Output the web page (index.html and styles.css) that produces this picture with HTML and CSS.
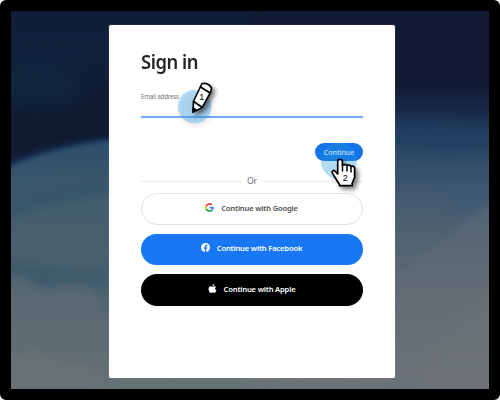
FILE: index.html
```html
<!DOCTYPE html>
<html lang="en">
<head>
<meta charset="utf-8">
<title>Sign in</title>
<link rel="stylesheet" href="styles.css">
</head>
<body>
<main class="frame">
  <svg class="scene" viewBox="11 11 478 378" preserveAspectRatio="none" color-interpolation-filters="sRGB" aria-hidden="true">
    <defs>
      <linearGradient id="sky" x1="0" y1="0" x2="0" y2="1">
        <stop offset="0" stop-color="#101c38"/>
        <stop offset=".14" stop-color="#10213c"/>
        <stop offset=".27" stop-color="#101a30"/>
        <stop offset="1" stop-color="#101a30"/>
      </linearGradient>
      <linearGradient id="earth" gradientUnits="userSpaceOnUse" x1="0" y1="130" x2="0" y2="389">
        <stop offset="0" stop-color="#294b6b"/>
        <stop offset=".18" stop-color="#38566c"/>
        <stop offset=".5" stop-color="#48606c"/>
        <stop offset="1" stop-color="#6e7577"/>
      </linearGradient>
      <linearGradient id="right" gradientUnits="userSpaceOnUse" x1="0" y1="85" x2="0" y2="389">
        <stop offset="0" stop-color="#111c35"/>
        <stop offset=".08" stop-color="#172947"/>
        <stop offset=".15" stop-color="#203a5b"/>
        <stop offset=".23" stop-color="#2e4b67"/>
        <stop offset=".37" stop-color="#435970"/>
        <stop offset=".48" stop-color="#4f6271"/>
        <stop offset=".72" stop-color="#616b74"/>
        <stop offset="1" stop-color="#707577"/>
      </linearGradient>
      <filter id="b2" x="-20%" y="-20%" width="140%" height="140%"><feGaussianBlur stdDeviation="2"/></filter>
      <filter id="b4" x="-20%" y="-20%" width="140%" height="140%"><feGaussianBlur stdDeviation="3.500"/></filter>
      <filter id="b5" x="-30%" y="-30%" width="160%" height="160%"><feGaussianBlur stdDeviation="5"/></filter>
      <filter id="b10" x="-50%" y="-50%" width="200%" height="200%"><feGaussianBlur stdDeviation="10"/></filter>
    </defs>
    <rect width="500" height="400" fill="url(#sky)"/>
    <ellipse cx="35" cy="88" rx="48" ry="23" fill="#10304a" opacity=".45" filter="url(#b10)"/>
    <path d="M0 166Q50 144 120 137V150L0 176Z" fill="#17365e" filter="url(#b4)"/>
    <path d="M0 171Q50 147 120 139H260V400H0Z" fill="url(#earth)" filter="url(#b2)"/>
    <path d="M0 191Q60 165 120 171V193L70 199L0 218Z" fill="#3b5669" opacity=".6" filter="url(#b5)"/>
    <path d="M0 207Q40 196 120 179V196L60 202L0 221Z" fill="#325370" opacity=".4" filter="url(#b5)"/>
    <path d="M0 219L20 215L42 206L62 202L80 202L94 194L120 192V290H0Z" fill="#4c626e" opacity=".5" filter="url(#b4)"/>
    <path d="M0 263Q35 260 60 267T120 263V286L88 289L62 286L38 289L24 281L0 288Z" fill="#35566a" opacity=".55" filter="url(#b5)"/>
    <path d="M0 281Q24 268 32 285L52 289L66 285Q86 280 96 294Q103 313 120 319V400H0Z" fill="#606c75" opacity=".5" filter="url(#b4)"/>
    <path d="M100 274H120V320L106 311Z" fill="#48616e" opacity=".6" filter="url(#b5)"/>
    <path d="M0 359L38 351L52 360L82 361L108 381V400H0Z" fill="#707472" opacity=".5" filter="url(#b4)"/>
    <rect x="250" width="250" height="400" fill="url(#right)"/>
    <rect x="250" width="250" height="85" fill="#10182f" opacity=".65" filter="url(#b5)"/>
    <path d="M380 120Q432 120 500 130V149L448 155L380 144Z" fill="#1f4266" opacity=".5" filter="url(#b5)"/>
    <path d="M440 187L500 184V199L462 213Z" fill="#3d5878" opacity=".55" filter="url(#b5)"/>
    <path d="M530 182L475 214L457 230L415 260L385 286V420H530Z" fill="#687078" opacity=".35" filter="url(#b4)"/>
    <path d="M530 250L440 340L405 420H530Z" fill="#737876" opacity=".3" filter="url(#b10)"/>
    <path d="M90 379L190 374L250 379L420 382V400H90Z" fill="#657278" opacity=".7" filter="url(#b4)"/>
  </svg>

  <section class="card">
    <h1 class="title">Sign in</h1>
    <label class="label" for="email">Email address</label>
    <input class="field" id="email" type="email">
    <div class="actions"><button class="continue">Continue</button></div>
    <div class="divider"><span>Or</span></div>
    <div class="providers">
      <button class="provider google">
        <svg class="logo" viewBox="0 0 48 48" aria-hidden="true">
          <path fill="#ea4335" d="M24 9.500c3.500 0 6.700 1.200 9.200 3.600l6.900-6.900C35.900 2.400 30.500 0 24 0 14.600 0 6.500 5.400 2.600 13.200l8 6.200C12.400 13.700 17.700 9.500 24 9.500z"/>
          <path fill="#4285f4" d="M47 24.500c0-1.600-.2-3.100-.4-4.500H24v9h12.900c-.6 3-2.300 5.500-4.700 7.200l7.700 6C44.400 38 47 31.800 47 24.500z"/>
          <path fill="#fbbc05" d="M10.500 28.600A14.500 14.500 0 0 1 10.500 19.400l-8-6.200a24 24 0 0 0 0 21.600z"/>
          <path fill="#34a853" d="M24 48c6.500 0 11.900-2.100 15.900-5.800l-7.700-6c-2.200 1.500-4.900 2.300-8.200 2.300-6.300 0-11.600-4.200-13.500-9.900l-8 6.200C6.500 42.600 14.600 48 24 48z"/>
        </svg>
        <span>Continue with Google</span>
      </button>
      <button class="provider facebook">
        <svg class="logo" viewBox="0 0 24 24" aria-hidden="true">
          <path fill="#fff" d="M24 12.070C24 5.400 18.600 0 12 0S0 5.400 0 12.070C0 18.100 4.400 23.100 10.100 24v-8.400H7.100v-3.500h3V9.400c0-3 1.800-4.700 4.500-4.700 1.300 0 2.700.2 2.700.2v3h-1.500c-1.500 0-2 .9-2 1.900v2.300h3.400l-.5 3.500h-2.900V24C19.600 23.100 24 18.100 24 12.070z"/>
        </svg>
        <span>Continue with Facebook</span>
      </button>
      <button class="provider apple">
        <svg class="logo" viewBox="0 0 24 24" aria-hidden="true">
          <path fill="#fff" d="M16.800 0c.2 2.900-2.200 5.700-5 5.500C11.500 2.800 14 .2 16.800 0zM21.600 8.200c-4 2.500-3.400 7.700.8 9.300-.8 2.200-2.900 6-5.300 6.300-1.700.1-2.400-1-4.600-1s-3 1-4.500 1C4.800 23.800 1.500 17.500 1.500 13c0-4.500 2.800-7.200 6-7.200 2 0 3.400 1.200 5 1.200 1.500 0 2.700-1.300 5.300-1.300 1.500 0 2.900.9 3.800 2.500z"/>
        </svg>
        <span>Continue with Apple</span>
      </button>
    </div>
  </section>

  <svg class="marker pencil" viewBox="170 75 55 60" aria-hidden="true">
    <circle class="halo" cx="194.700" cy="106.500" r="16.800"/>
    <g class="drawn" stroke-linejoin="round" stroke-linecap="round">
      <path d="M202 83.500Q208.500 82.500 211.500 88L210.700 92L202.200 107.600L193.200 112L193.400 101.500Z" fill="#fff" stroke="#000" stroke-width="1.600"/>
      <path d="M200.500 87L209.300 92.500M193.700 101.500L202 107.200" fill="none" stroke="#000" stroke-width="1.700"/>
      <path d="M193.200 107.500L196.400 109.700L193 112.500Z" stroke="#000"/>
    </g>
    <text class="digit" x="199.200" y="99.800">1</text>
  </svg>
  <svg class="marker hand" viewBox="310 140 60 60" aria-hidden="true">
    <circle class="halo" cx="339" cy="161" r="18"/>
    <g class="drawn">
      <path d="M340 159.400Q337.700 159.400 337.700 161.700V174L335 171.200Q333 169.600 332.200 171.500Q332 172.500 333.200 174.400L339.500 184.500V185.700H352.200V183L354.600 177.500V168.200Q354.200 165.600 351.200 166.300Q350 164.500 347 165.400Q345.600 163.900 342.400 165V161.700Q342.400 159.400 340 159.400Z" fill="#fff" stroke="#000" stroke-width="1.700" stroke-linejoin="round"/>
      <path d="M342.500 164.500V171M347 165.500V171M351 166.500V172" fill="none" stroke="#000" stroke-width="1.500" stroke-linecap="round"/>
    </g>
    <text class="digit" x="342.700" y="181.200">2</text>
  </svg>
</main>
</body>
</html>
```
FILE: styles.css
```css
* { box-sizing: border-box; }

body {
  margin: 0;
  background: #fff;
  font-family: "Noto Sans", "Open Sans", sans-serif;
}

.frame {
  position: relative;
  display: flex;
  justify-content: center;
  align-items: flex-start;
  width: 500px;
  height: 400px;
  padding: 14px 0 0 4px;
  border: 11px solid #000;
  border-radius: 6px;
  background: #000;
  overflow: hidden;
}

.scene {
  position: absolute;
  inset: 0;
  width: 478px;
  height: 378px;
}

.card {
  position: relative;
  width: 286px;
  height: 353px;
  padding: 24px 32px 0;
  border-radius: 2px;
  background: #fff;
  box-shadow: 0 0 1px rgba(210, 225, 240, .6);
}

.title {
  margin: 0;
  color: #252525;
  font-size: 20px;
  font-weight: 600;
  line-height: 26px;
  letter-spacing: -.5px;
  transform: scaleX(.92);
  transform-origin: left;
}

.label {
  display: block;
  margin-top: 16px;
  color: #747474;
  font-size: 6.200px;
  line-height: 12px;
  letter-spacing: -.2px;
}

.field {
  display: block;
  width: 100%;
  height: 15px;
  padding: 0;
  border: 0;
  border-bottom: 2px solid #70adf7;
  background: none;
  outline: none;
}

.actions {
  display: flex;
  justify-content: flex-end;
  margin-top: 25px;
}

button {
  font-family: inherit;
  padding: 0;
  border: 0;
}

.continue {
  width: 48px;
  height: 18px;
  border-radius: 9px;
  background: #1473e6;
  color: #fff;
  font-size: 7.200px;
  font-weight: 500;
  line-height: 16px;
  letter-spacing: -.1px;
}

.divider {
  display: flex;
  align-items: center;
  gap: 6px;
  height: 14px;
  margin-top: 13px;
  color: #747474;
  font-size: 8.800px;
  letter-spacing: -.3px;
}

.divider span { margin-top: -1px; }

.divider::before,
.divider::after {
  content: "";
  flex: 1;
  height: 1px;
  background: #ededed;
}

.providers {
  display: grid;
  gap: 9px;
  margin-top: 5px;
}

.provider {
  display: flex;
  justify-content: center;
  align-items: center;
  gap: 7px;
  height: 31.500px;
  padding: 0 1px 2px 0;
  border-radius: 16px;
  color: #fff;
  font-size: 7.600px;
  font-weight: 600;
  letter-spacing: -.18px;
}

.google {
  border: 1px solid #e3e3e3;
  background: #fff;
  color: #505050;
}

.facebook { background: #1877f2; }
.apple { background: #000; }

.logo {
  width: 9px;
  height: 9px;
  margin-top: -1px;
}

.marker {
  position: absolute;
  pointer-events: none;
}

.pencil { left: 159px; top: 64px; width: 55px; height: 60px; }
.hand { left: 299px; top: 129px; width: 60px; height: 60px; }

.halo {
  fill: #43a9ee;
  fill-opacity: .4;
  filter: drop-shadow(1px 3px 2px rgba(0, 0, 0, .2));
}

.hand .halo { fill: #1d96e2; fill-opacity: .33; filter: none; }
.drawn { filter: drop-shadow(3px 3px 2px rgba(0, 0, 0, .5)); }

.digit {
  font-family: "Liberation Sans", Arial, sans-serif;
  font-size: 9px;
  fill: #000;
}
```
